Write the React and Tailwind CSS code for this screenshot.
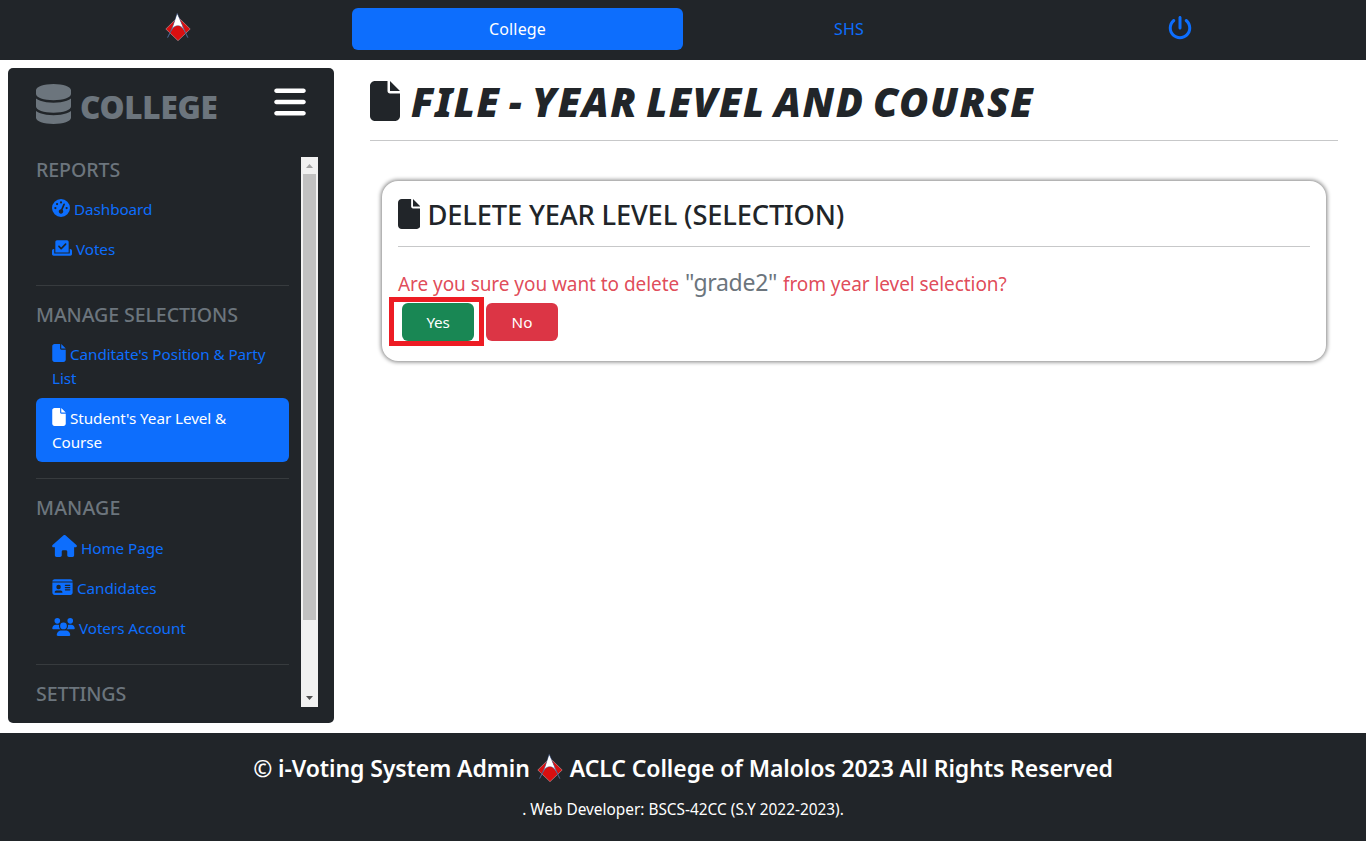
import {
  FaBars,
  FaCheckToSlot,
  FaDatabase,
  FaFile,
  FaGaugeHigh,
  FaHouse,
  FaIdCard,
  FaPowerOff,
  FaUsers,
} from 'react-icons/fa6';

function Logo({ className }) {
  return (
    <svg viewBox="0 0 26 28" className={className} aria-hidden="true">
      <path d="M13 4 L25.2 16 L13 27.7 L0.8 16 Z" fill="#d90f10" stroke="#b5a5a8" strokeWidth="0.6" />
      <path
        d="M12.2 0.5 C10 8 6.5 18 2.6 24.6 C5.5 18.5 8 12.6 12.8 12.4 C17.6 12.6 20 18.5 22.8 24.6 C19.5 18 15.5 8 12.2 0.5 Z"
        fill="#fff"
        stroke="#4b6390"
        strokeWidth="0.7"
      />
      <path d="M12.2 1.5 L8.4 13.4 Q12.8 11 17.2 13.4 Z" fill="#fff" />
    </svg>
  );
}

function Heading({ children, className = '' }) {
  return (
    <h5 className={`h-8 pt-px text-[19.6px] leading-6 font-medium text-[#6c757d] ${className}`}>
      {children}
    </h5>
  );
}

function NavItem({ icon: Icon, iconClass, active, className = '', children }) {
  return (
    <a
      href="#"
      className={`block rounded-md px-4 py-2 text-[15.25px] leading-6 tracking-[-0.07px] whitespace-nowrap ${
        active ? 'bg-[#0d6efd] text-white' : 'text-[#0d6efd]'
      } ${className}`}
    >
      <Icon className={`mr-[4.5px] -ml-[0.5px] inline ${iconClass}`} />
      {children}
    </a>
  );
}

function Divider() {
  return <hr className="my-4 border-t border-[#373b3e]" />;
}

function Sidebar() {
  return (
    <aside className="flex h-[655px] w-[326px] shrink-0 flex-col rounded-[5px] bg-[#212529] pt-4 pr-4 pb-4 pl-7">
      <div className="flex h-[73px] justify-between pr-3">
        <div className="flex items-start text-[#6c757d]">
          <FaDatabase className="h-10 w-[35px]" />
          <h2 className="ml-[9px] pt-[4px] text-[31.5px] leading-[38px] font-black tracking-[-0.3px]">COLLEGE</h2>
        </div>
        <FaBars className="-mt-[0.5px] h-[36px] w-[32px] text-white" />
      </div>
      <div className="flex h-[550px] justify-between overflow-hidden">
        <nav className="w-[253px]">
          <Heading className="tracking-[-0.1px]">REPORTS</Heading>
          <NavItem icon={FaGaugeHigh} iconClass="h-[18px] w-[18px] align-[-2px]">Dashboard</NavItem>
          <NavItem icon={FaCheckToSlot} iconClass="h-[18px] w-[20px] align-[-2px]">Votes</NavItem>
          <Divider />
          <Heading className="tracking-[-0.1px]">MANAGE SELECTIONS</Heading>
          <NavItem icon={FaFile} iconClass="h-[18px] w-[14px] align-[-2px]">
            Canditate's Position &amp; Party
            <br />
            List
          </NavItem>
          <NavItem active icon={FaFile} iconClass="h-[18px] w-[14px] align-[-2px]">
            Student's Year Level &amp;
            <br />
            Course
          </NavItem>
          <Divider />
          <Heading className="tracking-[0.15px]">MANAGE</Heading>
          <NavItem icon={FaHouse} iconClass="h-[22px] w-[25px] align-[-3px]" className="h-[41px]">Home Page</NavItem>
          <NavItem icon={FaIdCard} iconClass="h-[18px] w-[21px] align-[-2px]">Candidates</NavItem>
          <NavItem icon={FaUsers} iconClass="h-[18px] w-[23px] align-[-2px]">Voters Account</NavItem>
          <Divider />
          <Heading className="tracking-[-0.15px]">SETTINGS</Heading>
        </nav>
        <div className="flex w-[17px] flex-col items-center justify-between bg-[#f1f1f1]">
          <div>
            <div className="flex h-[17px] items-center justify-center">
              <svg viewBox="0 0 7 4" className="mt-px h-1 w-[7px]">
                <path d="M0 4 L3.5 0 L7 4 Z" fill="#a3a3a3" />
              </svg>
            </div>
            <div className="h-[446px] w-[13px] bg-[#c1c1c1]" />
          </div>
          <div className="flex h-[17px] items-center">
            <svg viewBox="0 0 7 4" className="-mt-px h-1 w-[7px]">
              <path d="M0 0 L3.5 4 L7 0 Z" fill="#505050" />
            </svg>
          </div>
        </div>
      </div>
    </aside>
  );
}

function DeleteCard() {
  return (
    <section className="mx-3 mt-10 h-[180px] rounded-[16px] bg-white px-4 pt-[18px] shadow-[0_0_4px_1px_#808080]">
      <div className="flex h-[47px] items-start">
        <FaFile className="-ml-[0.5px] h-[30px] w-[22.5px]" />
        <h3 className="-mt-px ml-[7.5px] text-[27.3px] leading-[34px] font-medium tracking-[-0.16px]">
          DELETE YEAR LEVEL (SELECTION)
        </h3>
      </div>
      <hr className="border-t border-[#c7c8c9]" />
      <p className="mt-[17px] h-[39px] text-[19px] leading-9 font-normal tracking-[-0.06px] whitespace-nowrap text-[#dc3545]/90">
        Are you sure you want to delete{' '}
        <span className="ml-px text-[23px] tracking-[-0.3px] text-[#6c757d]">"grade2"</span>
        {' '}<span className="ml-px">from year level selection?</span>
      </p>
      <div className="flex gap-3 pl-1">
        <div className="relative">
          <button className="h-[38px] w-[72px] rounded-md bg-[#198754] text-[15.25px] tracking-[-0.2px] text-white">Yes</button>
          <div className="pointer-events-none absolute -top-[6px] -left-[13px] h-[49px] w-[95px] border-[5px] border-[#ed1c24]" />
        </div>
        <button className="h-[38px] w-[72px] rounded-md bg-[#dc3545] text-[15.25px] text-white">No</button>
      </div>
    </section>
  );
}

export default function App() {
  return (
    <div className="flex h-[841px] w-[1366px] flex-col overflow-hidden bg-white font-['Noto_Sans',sans-serif] text-[#212529]">
      <header className="flex h-[60px] shrink-0 items-center bg-[#212529] pb-[2px] text-[16px] text-[#0d6efd]">
        <div className="flex w-[352px] justify-center pl-1">
          <Logo className="-mt-1 h-7 w-[26px]" />
        </div>
        <a href="#" className="flex h-[42px] w-[331px] items-center justify-center rounded-md bg-[#0d6efd] tracking-[0.15px] text-white">
          College
        </a>
        <a href="#" className="flex w-[331px] justify-center pl-px tracking-[0.2px]">SHS</a>
        <a href="#" className="flex w-[332px] justify-center">
          <FaPowerOff className="-mt-[3px] h-6 w-6" />
        </a>
      </header>
      <div className="flex h-[673px] px-2 pt-2">
        <Sidebar />
        <main className="ml-9 w-[968px]">
          <div className="flex h-[72px] items-start pt-[13px]">
            <FaFile className="-ml-[0.5px] h-10 w-[30px]" />
            <h1 className="ml-[11.5px] -mt-[3px] text-[40px] leading-[48px] font-black tracking-[1.5px] [word-spacing:-3.4px] whitespace-nowrap italic">
              FILE - YEAR LEVEL AND COURSE
            </h1>
          </div>
          <hr className="border-t border-[#c7c8c9]" />
          <DeleteCard />
        </main>
      </div>
      <footer className="flex grow flex-col items-center bg-[#212529] pt-[20px] text-white">
        <h4 className="flex h-[30px] items-center text-[23px] leading-[30px] font-semibold tracking-[-0.09px] whitespace-nowrap">
          © i-Voting System Admin
          <Logo className="mx-[7px] h-7 w-[26px]" />
          ACLC College of Malolos 2023 All Rights Reserved
        </h4>
        <p className="mt-[15px] text-[15.4px] leading-6">. Web Developer: BSCS-42CC (S.Y 2022-2023).</p>
      </footer>
    </div>
  );
}
